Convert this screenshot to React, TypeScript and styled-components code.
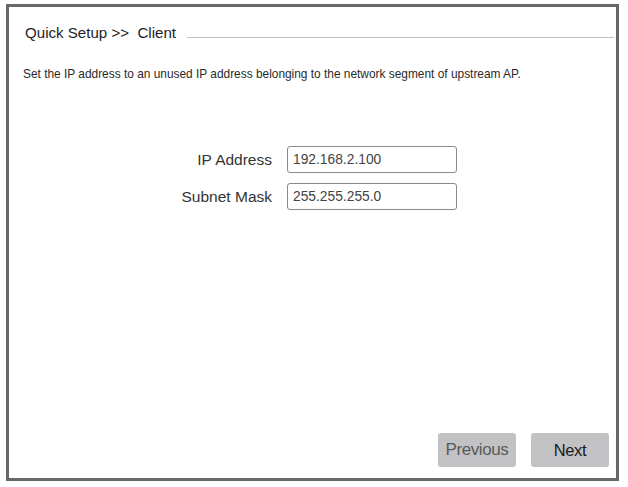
import React from "react";
import styled, { createGlobalStyle } from "styled-components";

const Global = createGlobalStyle`
  html, body { margin: 0; padding: 0; background: #ffffff; }
  body { font-family: "Liberation Sans", Arial, sans-serif; }
  * { box-sizing: border-box; }
`;

const Page = styled.div`
  padding: 4px 0 0 6px;
`;

const Panel = styled.div`
  width: 613px;
  height: 477px;
  border: 3px solid #686868;
  background: #fff;
  display: flex;
  flex-direction: column;
`;

const Header = styled.div`
  display: flex;
  align-items: flex-end;
  padding: 17px 2px 0 16px;
`;

const Title = styled.div`
  font-size: 15.1px;
  line-height: 18px;
  color: #1e1e1e;
  white-space: pre;
`;

const Rule = styled.div`
  flex: 1;
  border-top: 1px solid #c2c2c2;
  margin: 0 0 4px 11px;
`;

const Description = styled.p`
  margin: 25px 0 0 14px;
  font-size: 11.9px;
  line-height: 14px;
  color: #2a2a2a;
`;

const Form = styled.div`
  margin-top: 65px;
  padding-left: 143px;
  display: grid;
  grid-template-columns: 120px 170px;
  column-gap: 15px;
  row-gap: 10px;
  align-items: center;
`;

const Label = styled.label`
  text-align: right;
  font-size: 15.5px;
  color: #333;
`;

const Input = styled.input`
  width: 170px;
  height: 27px;
  border: 1px solid #8a8a8a;
  border-radius: 3px;
  padding: 0 5px;
  font-family: "Liberation Sans", Arial, sans-serif;
  font-size: 13.8px;
  color: #444;
  outline: none;
`;

const Spacer = styled.div`
  flex: 1;
`;

const Footer = styled.div`
  display: flex;
  justify-content: flex-end;
  gap: 15px;
  padding: 0 7px 11px 0;
`;

const Button = styled.button<{ $muted?: boolean }>`
  width: 78px;
  height: 34px;
  border: none;
  border-radius: 3px;
  background: #c2c2c4;
  font-family: "Liberation Sans", Arial, sans-serif;
  font-size: ${(p) => (p.$muted ? "17px" : "16.5px")};
  letter-spacing: -0.4px;
  color: ${(p) => (p.$muted ? "#5a5a5a" : "#1a1a1a")};
  padding: 0;
`;

export default function App() {
  return (
    <Page>
      <Global />
      <Panel>
        <Header>
          <Title>{"Quick Setup >>  Client"}</Title>
          <Rule />
        </Header>
        <Description>
          Set the IP address to an unused IP address belonging to the network segment of upstream AP.
        </Description>
        <Form>
          <Label>IP Address</Label>
          <Input defaultValue="192.168.2.100" />
          <Label>Subnet Mask</Label>
          <Input defaultValue="255.255.255.0" />
        </Form>
        <Spacer />
        <Footer>
          <Button $muted>Previous</Button>
          <Button>Next</Button>
        </Footer>
      </Panel>
    </Page>
  );
}
